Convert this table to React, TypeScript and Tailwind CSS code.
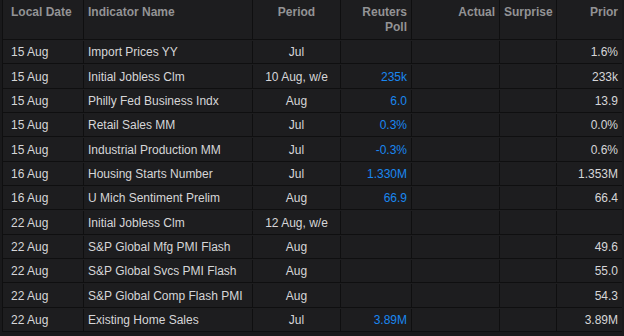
import { FC } from "react"

type Row = {
  date: string
  name: string
  period: string
  poll: string
  actual: string
  surprise: string
  prior: string
}

const rows: Row[] = [
  { date: "15 Aug", name: "Import Prices YY", period: "Jul", poll: "", actual: "", surprise: "", prior: "1.6%" },
  { date: "15 Aug", name: "Initial Jobless Clm", period: "10 Aug, w/e", poll: "235k", actual: "", surprise: "", prior: "233k" },
  { date: "15 Aug", name: "Philly Fed Business Indx", period: "Aug", poll: "6.0", actual: "", surprise: "", prior: "13.9" },
  { date: "15 Aug", name: "Retail Sales MM", period: "Jul", poll: "0.3%", actual: "", surprise: "", prior: "0.0%" },
  { date: "15 Aug", name: "Industrial Production MM", period: "Jul", poll: "-0.3%", actual: "", surprise: "", prior: "0.6%" },
  { date: "16 Aug", name: "Housing Starts Number", period: "Jul", poll: "1.330M", actual: "", surprise: "", prior: "1.353M" },
  { date: "16 Aug", name: "U Mich Sentiment Prelim", period: "Aug", poll: "66.9", actual: "", surprise: "", prior: "66.4" },
  { date: "22 Aug", name: "Initial Jobless Clm", period: "12 Aug, w/e", poll: "", actual: "", surprise: "", prior: "" },
  { date: "22 Aug", name: "S&P Global Mfg PMI Flash", period: "Aug", poll: "", actual: "", surprise: "", prior: "49.6" },
  { date: "22 Aug", name: "S&P Global Svcs PMI Flash", period: "Aug", poll: "", actual: "", surprise: "", prior: "55.0" },
  { date: "22 Aug", name: "S&P Global Comp Flash PMI", period: "Aug", poll: "", actual: "", surprise: "", prior: "54.3" },
  { date: "22 Aug", name: "Existing Home Sales", period: "Jul", poll: "3.89M", actual: "", surprise: "", prior: "3.89M" },
]

// column widths taken off the screenshot
const cols = "grid grid-cols-[81px_169px_88px_71px_88px_57px_66px]"
const cell = "border-r border-[#0f0f10] px-[4px] flex items-center"

export default function App() {
  return (
    <div
      className="w-[624px] h-[336px] bg-[#19191b] overflow-hidden"
      style={{ fontFamily: '"Liberation Sans", Arial, sans-serif' }}
    >
      <div className="ml-[2px] w-[620px] border-l border-[#0f0f10] bg-[#1d1d1f] text-[12px]">
        <Header />
        {rows.map((r, i) => (
          <DataRow key={i} row={r} />
        ))}
      </div>
    </div>
  )
}

const Header: FC = () => (
  <div className={`${cols} h-[40px] border-b border-[#0f0f10] font-bold text-[#939395] leading-[15px]`}>
    <div className={`${cell} items-start pt-[5px] pl-[8px]`}>Local Date</div>
    <div className={`${cell} items-start pt-[5px]`}>Indicator Name</div>
    <div className={`${cell} items-start justify-center pt-[5px]`}>Period</div>
    <div className={`${cell} items-start justify-end text-right pt-[5px]`}>
      Reuters
      <br />
      Poll
    </div>
    <div className={`${cell} items-start justify-end pt-[5px]`}>Actual</div>
    <div className={`${cell} items-start pt-[5px]`}>Surprise</div>
    <div className={`${cell} items-start justify-end pt-[5px] pr-[5px] border-r-0`}>Prior</div>
  </div>
)

const DataRow: FC<{ row: Row }> = ({ row }) => (
  <div className={`${cols} h-[24.35px] border-b border-[#0f0f10] text-[#d6d6d8] pt-[1px]`}>
    <div className={`${cell} pl-[8px]`}>{row.date}</div>
    <div className={cell}>{row.name}</div>
    <div className={`${cell} justify-center`}>{row.period}</div>
    <div className={`${cell} justify-end text-[#1a87f0]`}>{row.poll}</div>
    <div className={`${cell} justify-end`}>{row.actual}</div>
    <div className={`${cell} justify-end`}>{row.surprise}</div>
    <div className={`${cell} justify-end pr-[5px] border-r-0`}>{row.prior}</div>
  </div>
)
